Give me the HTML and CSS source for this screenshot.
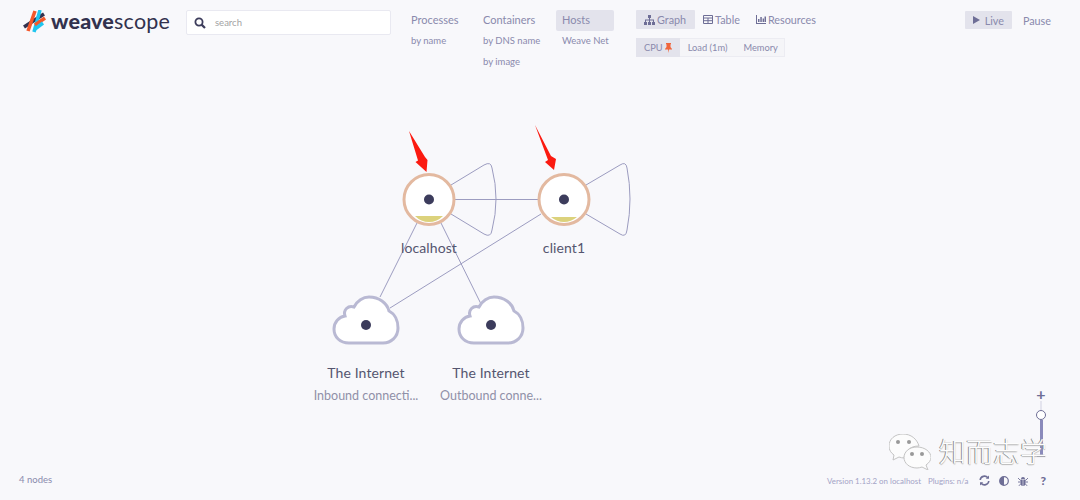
FILE: index.html
```html
<!DOCTYPE html>
<html lang="en">

<head>
    <meta charset="UTF-8">
    <title>Weave Scope</title>
    <link rel="stylesheet" href="styles.css">
</head>

<body>
    <div class="app">
        <!-- graph canvas, sits behind the bars -->
        <svg class="graph" width="1080" height="500" viewBox="0 0 1080 500">
            <g class="edge">
                <path d="M429 199.500H564" />
                <path d="M541 214L390 308" />
                <path d="M417 223L380 297" />
                <path d="M441 223L481 304" />
                <path d="M451 185L484 165Q491 161 492 168Q500 199 492 230Q491 238 484 234L451 214" />
                <path d="M586 185L620 165Q626 161 627 168Q633 199 627 230Q626 238 620 234L586 214" />
            </g>
            <g class="host">
                <circle class="ring" cx="429" cy="199.500" r="25" />
                <path class="fill" d="M415 216H443Q437 222 429 222Q421 222 415 216Z" />
                <circle class="dot" cx="429" cy="199.500" r="5" />
                <text class="label" x="429" y="253">localhost</text>
            </g>
            <g class="host">
                <circle class="ring" cx="564" cy="199.500" r="25" />
                <path class="fill" d="M551 217H577Q571 222 564 222Q557 222 551 217Z" />
                <circle class="dot" cx="564" cy="199.500" r="5" />
                <text class="label" x="564" y="253">client1</text>
            </g>
            <g class="cloud">
                <path class="shape" d="M349 343C340 343 334 337 334 329C334 322 339 317 345 316C343 310 348 305 354 307C357 301 363 297 369 297C379 297 387 303 389 311C395 314 398 321 398 328C398 337 391 343 383 343Z" />
                <circle class="dot" cx="366" cy="325" r="5" />
                <text class="label" x="366" y="378">The Internet</text>
                <text class="sub" x="366" y="400">Inbound connecti...</text>
            </g>
            <g class="cloud">
                <path class="shape" d="M474 343C465 343 459 337 459 329C459 322 464 317 470 316C468 310 473 305 479 307C482 301 488 297 494 297C504 297 512 303 514 311C520 314 523 321 523 328C523 337 516 343 508 343Z" />
                <circle class="dot" cx="491" cy="325" r="5" />
                <text class="label" x="491" y="378">The Internet</text>
                <text class="sub" x="491" y="400">Outbound conne...</text>
            </g>
            <g class="arrow">
                <polygon points="409,131 425,157 427.500,160 426.500,172 415.500,162 418,160.500" />
                <polygon points="535,125 551,156 556,159 554,170 545,162 548,160" />
            </g>
        </svg>

        <div class="topbar">
            <div class="logo">
                <svg width="26" height="24" viewBox="0 0 26 24" fill="none">
                    <path class="logo-dark" d="M1 17L21 4" />
                    <path class="logo-orange" d="M12 1L5 21" />
                    <path class="logo-cyan" d="M17 0L11 22" />
                    <path class="logo-orange" d="M22 8L12 15" />
                    <path class="logo-cyan" d="M20 13L12 19" />
                </svg>
                <span class="logo-text"><b>weave</b>scope</span>
            </div>
            <div class="search">
                <svg width="12" height="12" viewBox="0 0 12 12">
                    <circle cx="5" cy="5" r="3.600" fill="none" stroke="#3d3d5c" stroke-width="1.800" />
                    <path d="M7.600 7.600L11 11" stroke="#3d3d5c" stroke-width="2.200" />
                </svg>
                <span>search</span>
            </div>
            <div class="topologies">
                <div class="topo topo-processes">
                    <div class="topo-name">Processes</div>
                    <div class="topo-sub">by name</div>
                </div>
                <div class="topo topo-containers">
                    <div class="topo-name">Containers</div>
                    <div class="topo-sub">by DNS name</div>
                    <div class="topo-sub">by image</div>
                </div>
                <div class="topo topo-hosts">
                    <div class="topo-name active">Hosts</div>
                    <div class="topo-sub">Weave Net</div>
                </div>
            </div>
            <div class="options">
                <div class="views">
                    <div class="view active">
                        <svg width="11" height="10" viewBox="0 0 11 10" fill="#6e6e96">
                            <rect x="4" y="0" width="3" height="3" />
                            <rect x="0" y="7" width="3" height="3" />
                            <rect x="4" y="7" width="3" height="3" />
                            <rect x="8" y="7" width="3" height="3" />
                            <path d="M1 7V4.500H5V3H6V4.500H10V7H9V5.500H6V7H5V5.500H2V7Z" />
                        </svg>
                        Graph
                    </div>
                    <div class="view">
                        <svg width="10" height="9" viewBox="0 0 10 9">
                            <path d="M.5 .5H9.500V8.500H.5ZM.5 3H9.500M.5 5.700H9.500M5 3V8.500" fill="none" stroke="#6e6e96" />
                        </svg>
                        Table
                    </div>
                    <div class="view">
                        <svg width="10" height="9" viewBox="0 0 10 9" fill="#6e6e96">
                            <path d="M0 0H1V8H10V9H0Z" />
                            <path d="M2 4H3.500V7H2ZM4.300 2H5.800V7H4.300ZM6.600 3.500H8V7H6.600ZM8.500 1.500H10V7H8.500Z" />
                        </svg>
                        Resources
                    </div>
                </div>
                <div class="metrics">
                    <div class="metric active">
                        CPU
                        <svg width="7" height="10" viewBox="0 0 7 10" fill="#f0653c">
                            <path d="M1 0H6V1L5.500 1.500V4L7 6V6.500H4L3.500 10L3 6.500H0V6L1.500 4V1.500L1 1Z" />
                        </svg>
                    </div>
                    <div class="metric">Load (1m)</div>
                    <div class="metric">Memory</div>
                </div>
            </div>
            <div class="timeline">
                <div class="time active"><i class="play"></i>Live</div>
                <div class="time">Pause</div>
            </div>
        </div>

        <div class="footer">
            <div class="count">4 nodes</div>
            <div class="status">
                <span class="version">Version 1.13.2 on localhost</span>
                <span class="plugins">Plugins: n/a</span>
                <svg width="11" height="11" viewBox="0 0 11 11" fill="none" stroke="#6e6e96" stroke-width="1.600">
                    <path d="M1.200 5A4.300 4.300 0 0 1 8.800 2.800M9.800 6A4.300 4.300 0 0 1 2.200 8.200" />
                    <path d="M10 .5V3.800H6.800ZM1 10.500V7.200H4.200Z" fill="#6e6e96" stroke="none" />
                </svg>
                <svg width="10" height="10" viewBox="0 0 10 10">
                    <circle cx="5" cy="5" r="4.300" fill="none" stroke="#6e6e96" stroke-width="1.200" />
                    <path d="M5 .7A4.300 4.300 0 0 0 5 9.300Z" fill="#6e6e96" />
                </svg>
                <svg width="10" height="10" viewBox="0 0 10 10" fill="#6e6e96">
                    <path d="M3 3A2 2 0 0 1 7 3ZM2.500 3.500H4.700V10C3 9.800 2.500 8.500 2.500 7ZM5.300 3.500H7.500V7C7.500 8.500 7 9.800 5.300 10Z" />
                    <path d="M0 2L2.500 4.500M10 2L7.500 4.500M0 6H2.500M10 6H7.500M.5 10L2.800 8M9.500 10L7.200 8" stroke="#6e6e96" stroke-width=".9" />
                </svg>
                <span class="help">?</span>
            </div>
        </div>

        <!-- zoom slider -->
        <div class="zoom">
            <span class="zoom-btn">+</span>
            <div class="zoom-top"></div>
            <div class="zoom-handle"></div>
            <div class="zoom-track"></div>
            <span class="zoom-minus"></span>
        </div>

        <!-- watermark -->
        <div class="mark">
            <svg width="42" height="36" viewBox="0 0 42 36">
                <path class="bubble" d="M14 0C6 0 0 5 0 12C0 16 2 19 5 21L4 26L10 23C12 23.500 13 24 15 24C16 17 21 12 30 12C28 5 22 0 14 0Z" />
                <path class="bubble" d="M28 13C20 13 15 18 15 23.500C15 29 20 34 28 34C30 34 31 33.500 33 33L39 36L37 31C40 29 42 26 42 23.500C42 18 36 13 28 13Z" />
                <circle cx="9" cy="8" r="2" fill="#999" />
                <circle cx="20" cy="8" r="2" fill="#999" />
                <circle cx="23" cy="20" r="2" fill="#999" />
                <circle cx="33" cy="20" r="2" fill="#999" />
            </svg>
            <span>知而志学</span>
        </div>
    </div>
</body>

</html>
```

FILE: styles.css
```css
* {
    margin: 0;
    padding: 0;
    box-sizing: border-box;
}

html,
body {
    width: 100%;
    height: 100%;
    overflow: hidden;
    background: #f8f8fb;
}

.app {
    position: relative;
    width: 1080px;
    height: 500px;
    display: flex;
    flex-direction: column;
    font-family: "Lato", "Noto Sans CJK SC", sans-serif;
    color: #8a8aad;
}

/* graph */
.graph {
    position: absolute;
    left: 0;
    top: 0;
}

.edge path {
    fill: none;
    stroke: #9c9cc0;
    stroke-width: 1;
}

.ring {
    fill: #fff;
    stroke: #e3b9a0;
    stroke-width: 3;
}

.fill {
    fill: #dcd27c;
}

.dot {
    fill: #3c3c5c;
}

.shape {
    fill: #fff;
    stroke: #b9b9d3;
    stroke-width: 3;
}

.label {
    font-size: 14px;
    letter-spacing: .1px;
    fill: #55556f;
    text-anchor: middle;
}

.sub {
    font-size: 12.5px;
    fill: #9090a8;
    text-anchor: middle;
}

.arrow polygon {
    fill: #fb1a10;
}

/* top bar */
.topbar {
    position: relative;
    display: flex;
    align-items: flex-start;
    padding: 10px 21px 0 23px;
}

.logo {
    width: 163px;
    height: 24px;
    display: flex;
    align-items: center;
    gap: 2px;
}

.logo svg path {
    stroke-width: 3.500;
}

.logo-cyan {
    stroke: #1fc5ee;
}

.logo-orange {
    stroke: #f4582a;
}

.logo-dark {
    stroke: #32324e;
}

.logo-text {
    font-size: 21.500px;
    letter-spacing: .2px;
    color: #32324e;
    line-height: 22px;
    margin-bottom: 2px;
}

.logo-text b {
    font-weight: 900;
}

.search {
    width: 205px;
    height: 25px;
    display: flex;
    align-items: center;
    gap: 9px;
    padding-left: 7px;
    background: #fff;
    border: 1px solid #e9e9f1;
    border-radius: 2px;
    font-size: 9.500px;
    color: #a3a3a3;
}

.topologies {
    display: flex;
    margin-left: 14px;
}

.topo-processes {
    width: 72px;
}

.topo-containers {
    width: 79px;
}

.topo-hosts {
    width: 58px;
}

.topo-name {
    height: 21px;
    line-height: 19px;
    padding-left: 6px;
    font-size: 11px;
    border-radius: 2px;
}

.topo-name.active {
    background: #e3e3ec;
}

.topo-sub {
    height: 20px;
    line-height: 20px;
    padding-left: 6px;
    font-size: 9.500px;
    white-space: nowrap;
}

.topo-sub:nth-child(2) {
    margin-bottom: 1px;
}

.options {
    margin-left: 22px;
    display: flex;
    flex-direction: column;
    gap: 9px;
}

.views,
.metrics {
    display: flex;
    height: 19px;
    align-items: stretch;
}

.view,
.time {
    display: flex;
    align-items: center;
    gap: 2px;
    padding: 0 8px;
    font-size: 10.800px;
    border-radius: 1px;
}

.view:first-child {
    padding-right: 9px;
}

.time {
    gap: 5px;
}

.time + .time {
    padding-left: 11px;
}

.view.active,
.time.active {
    background: #e3e3ec;
}

.metrics {
    background: #f5f5f8;
    border: 1px solid #ececf2;
    width: 149px;
}

.metric {
    display: flex;
    align-items: center;
    gap: 2px;
    padding: 0 8px;
    font-size: 9.300px;
    white-space: nowrap;
}

.metric.active {
    background: #e3e3ec;
    margin: -1px 0 -1px -1px;
}

.timeline {
    margin-left: auto;
    margin-top: 1px;
    height: 18px;
    display: flex;
    align-items: stretch;
}

.play {
    width: 0;
    height: 0;
    border-left: 7px solid #6e6e96;
    border-top: 4px solid transparent;
    border-bottom: 4px solid transparent;
}

/* footer */
.footer {
    position: relative;
    margin-top: auto;
    display: flex;
    justify-content: space-between;
    align-items: center;
    padding: 0 34px 12px 13px;
    font-size: 7.900px;
}

.count {
    padding: 0 6px 2px;
    font-size: 9.500px;
}

.status {
    display: flex;
    align-items: center;
    gap: 9px;
    color: #a3a3c6;
}

.version {
    margin-right: -2px;
}

.plugins {
    margin-right: 2px;
}

.help {
    font-size: 12px;
    font-weight: 900;
    color: #6e6e96;
    margin-left: 3px;
}

/* zoom slider */
.zoom {
    position: absolute;
    left: 1032px;
    top: 387px;
    width: 18px;
    display: flex;
    flex-direction: column;
    align-items: center;
}

.zoom-btn {
    height: 14px;
    line-height: 14px;
    font-size: 16px;
    font-weight: 700;
    color: #6e6e96;
}

.zoom-top {
    width: 2px;
    height: 9px;
    background: #e4e4ee;
}

.zoom-handle {
    width: 10px;
    height: 10px;
    flex: none;
    border-radius: 50%;
    background: #fff;
    border: 1.500px solid #6e6e96;
}

.zoom-track {
    width: 3px;
    height: 35px;
    background: #8a8abb;
}

.zoom-minus {
    width: 8px;
    height: 2px;
    background: #6e6e96;
}

/* watermark */
.mark {
    position: absolute;
    left: 889px;
    top: 433px;
    display: flex;
    align-items: center;
    gap: 8px;
}

.bubble {
    fill: #fcfcfc;
    stroke: #c4c4c4;
    stroke-width: 1;
}

.mark span {
    font-size: 27px;
    font-weight: 300;
    color: #fdfdfd;
    text-shadow: -1px 0 0 #8d8d8d, 0 1px 1px #b5b5b5;
    margin-top: -2px;
}
```
